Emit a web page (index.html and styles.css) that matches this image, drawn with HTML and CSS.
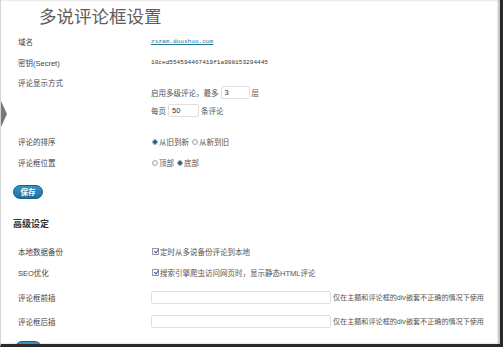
FILE: index.html
```html
<!DOCTYPE html>
<html lang="zh">
<head>
    <meta charset="UTF-8">
    <title>多说评论框设置</title>
    <link rel="stylesheet" href="styles.css">
</head>
<body>
    <div class="window">
        <span class="edgeArrow"></span>
        <h1 class="title">多说评论框设置</h1>
        <div class="settings">
            <div class="row">
                <div class="label">域名</div>
                <div class="field"><a class="mono link" href="#">zszam.duoshuo.com</a></div>
            </div>
            <div class="row">
                <div class="label">密钥(Secret)</div>
                <div class="field mono">10ced554594467419f1a998153294445</div>
            </div>
            <div class="row tall">
                <div class="label">评论显示方式</div>
                <div class="field stack">
                    <p class="line">启用多级评论，最多 <span class="textInput small">3</span> 层</p>
                    <p class="line">每页 <span class="textInput small wider">50</span> 条评论</p>
                </div>
            </div>
            <div class="row">
                <div class="label">评论的排序</div>
                <div class="field">
                    <span class="radio checked"></span>从旧到新
                    <span class="radio"></span>从新到旧
                </div>
            </div>
            <div class="row">
                <div class="label">评论框位置</div>
                <div class="field">
                    <span class="radio"></span>顶部
                    <span class="radio checked"></span>底部
                </div>
            </div>
        </div>
        <button class="saveBtn">保存</button>

        <h2 class="subTitle">高级设定</h2>
        <div class="settings">
            <div class="row">
                <div class="label">本地数据备份</div>
                <div class="field"><span class="check"></span>定时从多说备份评论到本地</div>
            </div>
            <div class="row">
                <div class="label">SEO优化</div>
                <div class="field"><span class="check"></span>搜索引擎爬虫访问网页时，显示静态HTML评论</div>
            </div>
            <div class="row roomy first">
                <div class="label">评论框前插</div>
                <div class="field"><span class="textInput long"></span><span class="hint">仅在主题和评论框的div嵌套不正确的情况下使用</span></div>
            </div>
            <div class="row roomy">
                <div class="label">评论框后插</div>
                <div class="field"><span class="textInput long"></span><span class="hint">仅在主题和评论框的div嵌套不正确的情况下使用</span></div>
            </div>
        </div>
        <!-- only the top of the second save button shows above the frame edge -->
        <span class="saveBtn cut"></span>
    </div>
</body>
</html>
```

FILE: styles.css
```css
:root {
    --text-color: #444;
    --link-color: #21759b;
    --frame-color: #2a2a2a;
}
body {
    margin: 0;
    background: #fff;
    font-family: "Liberation Sans", "Noto Sans CJK SC", sans-serif;
    font-size: 7.5px;
    color: var(--text-color);
}
.window {
    position: relative;
    width: 499px;
    height: 344px;
    border-left: 1px solid #d4d4d4;
    border-right: 3px solid var(--frame-color);
    border-bottom: 3px solid var(--frame-color);
    box-shadow: inset -2px 0 2px #bbb;
    overflow: hidden;
    background: #fff;
}
.edgeArrow {
    position: absolute;
    left: 0;
    top: 101px;
    width: 0;
    height: 0;
    border-top: 13px solid transparent;
    border-bottom: 13px solid transparent;
    border-left: 6px solid #777;
}
.title {
    margin: 0;
    padding: 5px 0 0 38px;
    font-family: "Noto Sans CJK SC", sans-serif;
    font-size: 17.5px;
    line-height: 22px;
    font-weight: normal;
    color: #5e5e5e;
}
.settings {
    padding-top: 4px;
}
.row {
    display: grid;
    grid-template-columns: 133px 1fr;
    align-items: center;
    height: 21px;
    padding-left: 17px;
}
.row.tall {
    height: 58px;
    align-items: start;
}
.row.tall .label {
    line-height: 21px;
}
.row.roomy {
    height: 24px;
}
.row.roomy.first {
    margin-top: 2px;
}
.field {
    display: flex;
    align-items: center;
    color: #555;
}
.stack {
    flex-direction: column;
    align-items: flex-start;
    gap: 4px;
    padding-top: 12px;
}
.line {
    margin: 0;
    display: flex;
    align-items: center;
    height: 14px;
    gap: 2px;
}
.mono {
    font-family: "Liberation Mono", monospace;
    font-size: 6.1px;
    color: #333;
}
.link {
    color: var(--link-color);
    text-decoration: underline;
}
.textInput {
    display: inline-block;
    box-sizing: border-box;
    height: 13px;
    line-height: 11px;
    padding-left: 3px;
    border: 1px solid #dfdfdf;
    border-radius: 2px;
    background: #fff;
    color: #333;
}
.small {
    width: 29px;
}
.wider {
    width: 31px;
}
.long {
    width: 180px;
    margin-right: 2px;
}
.hint {
    color: #555;
    font-size: 7.1px;
}
.radio {
    display: inline-block;
    box-sizing: border-box;
    width: 6px;
    height: 6px;
    margin: 0 1px 0 1px;
    border: 1px solid #aaa;
    border-radius: 50%;
    background: #f2f2f2;
}
.field .radio:not(:first-child) {
    margin-left: 3px;
}
.radio.checked {
    background: radial-gradient(circle, #1d5f8a 0 1.6px, #e8e8e8 2px);
}
.check {
    display: inline-block;
    position: relative;
    box-sizing: border-box;
    width: 7px;
    height: 7px;
    margin: 0 1px;
    border: 1px solid #999;
    background: #fff;
}
.check::after {
    content: "";
    position: absolute;
    left: 1.5px;
    top: -1px;
    width: 2px;
    height: 4px;
    border-right: 1.3px solid #2c62b8;
    border-bottom: 1.3px solid #2c62b8;
    transform: rotate(40deg);
}
.saveBtn {
    display: block;
    box-sizing: border-box;
    margin: 12px 0 0 12px;
    width: 30px;
    height: 14px;
    padding: 0;
    border: 1px solid #1b5f85;
    border-radius: 7px;
    background: linear-gradient(#3a93c6, #1f6e9c);
    color: #fff;
    font-family: "Noto Sans CJK SC", serif;
    font-weight: bold;
    font-size: 7.5px;
    line-height: 12px;
}
.saveBtn.cut {
    margin: 8px 0 0 14px;
    width: 27px;
}
.subTitle {
    margin: 18px 0 0 12px;
    font-family: "Noto Sans CJK SC", sans-serif;
    font-size: 9px;
    line-height: 14px;
    font-weight: bold;
    color: #333;
}
.subTitle + .settings {
    padding-top: 10px;
}
```
